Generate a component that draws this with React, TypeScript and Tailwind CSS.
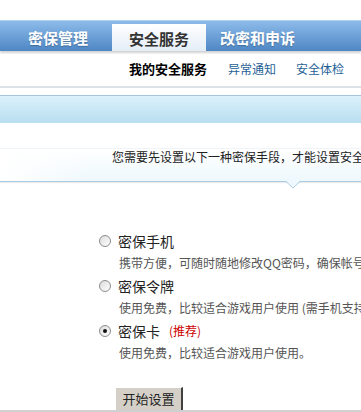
import React from 'react';

const options = [
  { title: '密保手机', desc: '携带方便，可随时随地修改QQ密码，确保帐号安全。', checked: false },
  { title: '密保令牌', desc: '使用免费，比较适合游戏用户使用 (需手机支持Java)。', checked: false },
  { title: '密保卡', desc: '使用免费，比较适合游戏用户使用。', checked: true, tag: '(推荐)' },
];

const Radio = ({ checked }: { checked: boolean }) => (
  <span className="w-[12px] h-[12px] rounded-full border border-[#8c8c8c] bg-gradient-to-br from-[#dcdcdc] to-white flex items-center justify-center shrink-0">
    {checked && <span className="w-[4px] h-[4px] rounded-full bg-[#111]" />}
  </span>
);

const App = () => {
  return (
    <div className="w-[361px] h-[412px] overflow-hidden bg-white font-['Noto_Sans_CJK_SC',sans-serif] text-[#222]">
      <div className="h-5" />

      {/* top tabs */}
      <div className="h-[31px] flex items-end bg-gradient-to-b from-[#8dbbea] to-[#4e87c4] border-t border-[#b2d1f0] shadow-[0_2px_2px_rgba(0,0,0,0.18)]">
        <div className="w-[112px] h-full flex items-center pl-[28px] pt-[2px] text-[15px] font-bold text-white leading-none [text-shadow:0_1px_1px_rgba(0,0,0,0.25)]">
          密保管理
        </div>
        <div className="w-[94px] h-[27px] flex items-center justify-center pt-[2px] bg-gradient-to-b from-white to-[#e4edf7] text-[15px] font-bold text-[#333] leading-none">
          安全服务
        </div>
        <div className="h-full flex items-center pl-[14px] pt-[2px] text-[15px] font-bold text-white leading-none [text-shadow:0_1px_1px_rgba(0,0,0,0.25)]">
          改密和申诉
        </div>
      </div>

      {/* sub nav */}
      <div className="h-[35px] flex items-center pl-[129px] whitespace-nowrap">
        <span className="text-[13px] font-bold text-black">我的安全服务</span>
        <span className="ml-[21px] text-[12px] text-[#1f5f96]">异常通知</span>
        <span className="ml-[20px] text-[12px] text-[#1f5f96]">安全体检</span>
      </div>
      <div className="h-[2px] bg-[#dbe3e9]" />
      <div className="h-[7px]" />
      <div className="h-[28px] border-t border-[#a6c5dc] bg-gradient-to-b from-[#dbf1fb] to-[#b8def0]" />
      <div className="h-[25px]" />

      {/* notice box */}
      <div className="relative h-[34px] border-t border-[#eef4f8] border-b border-b-[#a9cce4] bg-gradient-to-b from-white to-[#eef8fd] shadow-[0_1px_1px_rgba(0,0,0,0.08)]">
        <div className="absolute inset-y-0 left-0 w-[90px] bg-gradient-to-r from-white to-transparent" />
        <p className="relative pl-[112px] pt-[1px] text-[12px] leading-[14px] whitespace-nowrap text-[#222]">
          您需要先设置以下一种密保手段，才能设置安全服务。
        </p>
        <svg className="absolute left-[286px] top-[32px]" width="14" height="8" viewBox="0 0 14 8">
          <path d="M0 0 L7 7 L14 0 Z" fill="#eef8fd" />
          <path d="M0 0.5 L7 7 L14 0.5" fill="none" stroke="#a9cce4" strokeWidth="1" />
        </svg>
      </div>

      {/* options */}
      <div className="mt-[48px] pl-[99px] flex flex-col gap-[1px]">
        {options.map((o) => (
          <div key={o.title}>
            <div className="h-[22px] flex items-center gap-[7px]">
              <Radio checked={o.checked} />
              <span className="text-[14px] leading-none text-[#222]">{o.title}</span>
              {o.tag && <span className="ml-[2px] text-[12px] leading-none text-[#cc0000]">{o.tag}</span>}
            </div>
            <div className="h-[22px] flex items-center pl-[20px] text-[12px] whitespace-nowrap text-[#555]">
              {o.desc}
            </div>
          </div>
        ))}
      </div>

      {/* button */}
      <div className="mt-[21px] pl-[115px]">
        <button className="w-[68px] h-[23px] bg-[#d4d0c8] border-t border-l border-t-white border-l-white border-r-2 border-r-[#404040] text-[13px] text-[#222] leading-none">
          开始设置
        </button>
      </div>
      <div className="h-[2px] bg-[#d0d0d0]" />
    </div>
  );
};

export default App;
